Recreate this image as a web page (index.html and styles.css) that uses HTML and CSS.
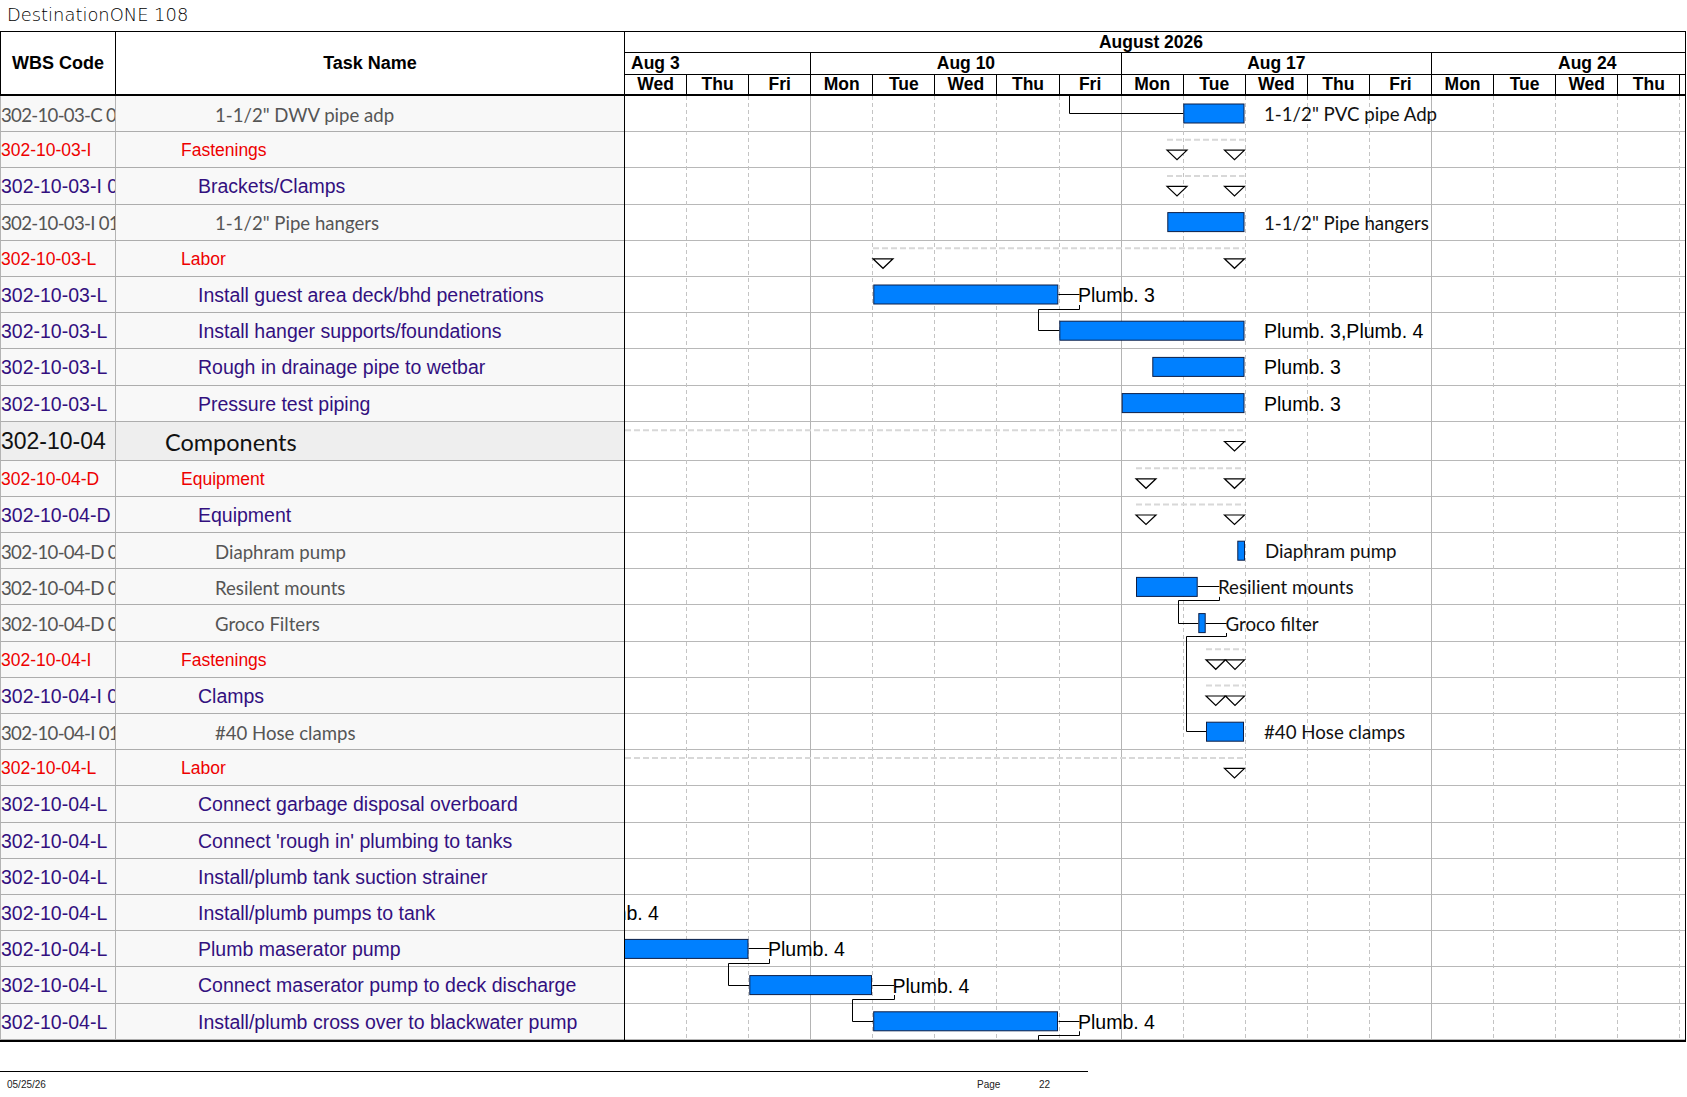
FILE: index.html
```html
<!DOCTYPE html>
<html lang="en">
<head>
<meta charset="utf-8">
<title>DestinationONE 108</title>
<link rel="stylesheet" href="styles.css">
</head>
<body>
<div class="title">DestinationONE 108</div>
<div class="sheet">
  <div class="head">
    <div class="h-wbs">WBS Code</div>
    <div class="h-task">Task Name</div>
    <div class="h-chart">
      <div class="h-month">August 2026</div>
      <div class="h-weeks">
        <div class="wk wk3 first">Aug 3</div>
        <div class="wk wk5">Aug 10</div>
        <div class="wk wk5">Aug 17</div>
        <div class="wk wk5 last">Aug 24</div>
      </div>
      <div class="h-days">
        <div class="day">Wed</div><div class="day">Thu</div><div class="day">Fri</div>
        <div class="day">Mon</div><div class="day">Tue</div><div class="day">Wed</div><div class="day">Thu</div><div class="day">Fri</div>
        <div class="day">Mon</div><div class="day">Tue</div><div class="day">Wed</div><div class="day">Thu</div><div class="day">Fri</div>
        <div class="day">Mon</div><div class="day">Tue</div><div class="day">Wed</div><div class="day">Thu</div><div class="day rest"></div>
      </div>
    </div>
  </div>

  <div class="body">
    <div class="chart">
      <div class="crows">
        <div class="crow"></div><div class="crow"></div><div class="crow"></div><div class="crow"></div><div class="crow"></div>
        <div class="crow"></div><div class="crow"></div><div class="crow"></div><div class="crow"></div><div class="crow comp"></div>
        <div class="crow"></div><div class="crow"></div><div class="crow"></div><div class="crow"></div><div class="crow"></div>
        <div class="crow"></div><div class="crow"></div><div class="crow"></div><div class="crow"></div><div class="crow"></div>
        <div class="crow"></div><div class="crow"></div><div class="crow"></div><div class="crow"></div><div class="crow"></div>
        <div class="crow"></div>
      </div>
      <svg class="canvas" width="1060" height="944" viewBox="625 96 1060 944" xmlns="http://www.w3.org/2000/svg">
        <path class="grid-day" d="M686.5 96V1040M748.5 96V1040M872.5 96V1040M934.5 96V1040M996.5 96V1040M1059.5 96V1040M1183.5 96V1040M1245.5 96V1040M1307.5 96V1040M1369.5 96V1040M1493.5 96V1040M1555.5 96V1040M1617.5 96V1040M1679.5 96V1040"/>
        <path class="grid-week" d="M810.5 96V1040M1121.5 96V1040M1431.5 96V1040"/>
        <path class="summary" d="M1167 139.7H1244.5M1167 175.9H1244.5M873 248.3H1244.5M625 430.3H1244.5M1136 468.3H1244.5M1136 504.5H1244.5M1206 649.3H1244.5M1206 685.5H1244.5M625 757.9H1244.5"/>
        <path class="link" d="M1069.5 96V113.5H1183.3
          M1058.3 294.5H1079.5M1079.5 305V309.5H1038.5V330.5H1059.3
          M1197.7 586.5H1219.3M1219.5 596.9V600.5H1178.5V623.5H1198.3
          M1205.7 623.5H1226.7M1226.5 633V636.5H1186.5V731.5H1206
          M748.5 948.5H769.5M769.5 958.9V963.5H728.5V985.5H749.3
          M872.5 985.5H894M894.5 995V999.5H852.5V1021.5H873.2
          M1058.5 1021.5H1079.5M1079.5 1031.3V1035.5H1038.5V1045"/>
        <g class="bars">
          <rect x="1183.8" y="104" width="60.2" height="19"/>
          <rect x="1167.8" y="212.6" width="76.2" height="19"/>
          <rect x="873.8" y="285" width="184" height="19"/>
          <rect x="1059.8" y="321.2" width="184.2" height="19"/>
          <rect x="1152.8" y="357.4" width="91.2" height="19"/>
          <rect x="1122.2" y="393.6" width="121.8" height="19"/>
          <rect x="1237.8" y="541.2" width="6.7" height="19"/>
          <rect x="1136.5" y="577.4" width="60.7" height="19"/>
          <rect x="1198.8" y="613.6" width="6.4" height="19"/>
          <rect x="1206.5" y="722.2" width="37" height="19"/>
          <rect x="610" y="939.4" width="138" height="19"/>
          <rect x="749.8" y="975.6" width="121.7" height="19"/>
          <rect x="873.7" y="1011.8" width="183.8" height="19"/>
        </g>
        <g class="ms">
          <polygon points="1167,150.2 1187,150.2 1177,159.7"/>
          <polygon points="1224.5,150.2 1244.5,150.2 1234.5,159.7"/>
          <polygon points="1167,186.4 1187,186.4 1177,195.9"/>
          <polygon points="1224.5,186.4 1244.5,186.4 1234.5,195.9"/>
          <polygon points="873,258.8 893,258.8 883,268.3"/>
          <polygon points="1224.5,258.8 1244.5,258.8 1234.5,268.3"/>
          <polygon points="1224.5,441.5 1244.5,441.5 1234.5,451"/>
          <polygon points="1136,478.8 1156,478.8 1146,488.3"/>
          <polygon points="1224.5,478.8 1244.5,478.8 1234.5,488.3"/>
          <polygon points="1136,515 1156,515 1146,524.5"/>
          <polygon points="1224.5,515 1244.5,515 1234.5,524.5"/>
          <polygon points="1206,659.8 1225.5,659.8 1215.75,669.3"/>
          <polygon points="1225.5,659.8 1244.5,659.8 1235,669.3"/>
          <polygon points="1206,696 1225.5,696 1215.75,705.5"/>
          <polygon points="1225.5,696 1244.5,696 1235,705.5"/>
          <polygon points="1224.5,768.4 1244.5,768.4 1234.5,777.9"/>
        </g>
      </svg>
      <span class="lbl k" style="left:639px;top:8px">1-1/2" PVC pipe Adp</span>
      <span class="lbl k" style="left:639px;top:116.5px">1-1/2" Pipe hangers</span>
      <span class="lbl a" style="left:453px;top:189px">Plumb. 3</span>
      <span class="lbl a" style="left:639px;top:225.2px">Plumb. 3,Plumb. 4</span>
      <span class="lbl a" style="left:639px;top:261.4px">Plumb. 3</span>
      <span class="lbl a" style="left:639px;top:297.6px">Plumb. 3</span>
      <span class="lbl k" style="left:640px;top:445.2px">Diaphram pump</span>
      <span class="lbl k" style="left:593px;top:481.4px">Resilient mounts</span>
      <span class="lbl k" style="left:600.5px;top:517.6px">Groco filter</span>
      <span class="lbl k" style="left:639px;top:626.2px">#40 Hose clamps</span>
      <span class="lbl a" style="left:-43px;top:807.2px">Plumb. 4</span>
      <span class="lbl a" style="left:143px;top:843.4px">Plumb. 4</span>
      <span class="lbl a" style="left:267.5px;top:879.6px">Plumb. 4</span>
      <span class="lbl a" style="left:453px;top:915.8px">Plumb. 4</span>
    </div>

    <div class="cell wbs g">302-10-03-C 01</div><div class="cell task g">1-1/2" DWV pipe adp</div>
    <div class="cell wbs r">302-10-03-I</div><div class="cell task r">Fastenings</div>
    <div class="cell wbs p">302-10-03-I 01</div><div class="cell task p">Brackets/Clamps</div>
    <div class="cell wbs g">302-10-03-I 01 01</div><div class="cell task g">1-1/2" Pipe hangers</div>
    <div class="cell wbs r">302-10-03-L</div><div class="cell task r">Labor</div>
    <div class="cell wbs p">302-10-03-L</div><div class="cell task p">Install guest area deck/bhd penetrations</div>
    <div class="cell wbs p">302-10-03-L</div><div class="cell task p">Install hanger supports/foundations</div>
    <div class="cell wbs p">302-10-03-L</div><div class="cell task p">Rough in drainage pipe to wetbar</div>
    <div class="cell wbs p">302-10-03-L</div><div class="cell task p">Pressure test piping</div>
    <div class="cell wbs c">302-10-04</div><div class="cell task c">Components</div>
    <div class="cell wbs r">302-10-04-D</div><div class="cell task r">Equipment</div>
    <div class="cell wbs p">302-10-04-D</div><div class="cell task p">Equipment</div>
    <div class="cell wbs g">302-10-04-D 01</div><div class="cell task g">Diaphram pump</div>
    <div class="cell wbs g">302-10-04-D 02</div><div class="cell task g">Resilent mounts</div>
    <div class="cell wbs g">302-10-04-D 03</div><div class="cell task g">Groco Filters</div>
    <div class="cell wbs r">302-10-04-I</div><div class="cell task r">Fastenings</div>
    <div class="cell wbs p">302-10-04-I 01</div><div class="cell task p">Clamps</div>
    <div class="cell wbs g">302-10-04-I 01 01</div><div class="cell task g">#40 Hose clamps</div>
    <div class="cell wbs r">302-10-04-L</div><div class="cell task r">Labor</div>
    <div class="cell wbs p">302-10-04-L</div><div class="cell task p">Connect garbage disposal overboard</div>
    <div class="cell wbs p">302-10-04-L</div><div class="cell task p">Connect 'rough in' plumbing to tanks</div>
    <div class="cell wbs p">302-10-04-L</div><div class="cell task p">Install/plumb tank suction strainer</div>
    <div class="cell wbs p">302-10-04-L</div><div class="cell task p">Install/plumb pumps to tank</div>
    <div class="cell wbs p">302-10-04-L</div><div class="cell task p">Plumb maserator pump</div>
    <div class="cell wbs p">302-10-04-L</div><div class="cell task p">Connect maserator pump to deck discharge</div>
    <div class="cell wbs p">302-10-04-L</div><div class="cell task p">Install/plumb cross over to blackwater pump</div>
  </div>
</div>

<div class="footer">
  <span class="date">05/25/26</span>
  <span class="page">Page</span>
  <span class="num">22</span>
</div>
</body>
</html>
```

FILE: styles.css
```css
* { box-sizing: border-box; }

html, body {
  margin: 0;
  background: #ffffff;
}

body {
  font-family: "Liberation Sans", Arial, sans-serif;
  color: #000;
  width: 1687px;
  height: 1097px;
  overflow: hidden;
}

.title {
  height: 31px;
  padding-left: 7px;
  font-family: "DejaVu Sans", sans-serif;
  font-weight: 200;
  font-size: 17.9px;
  line-height: 29px;
  color: #000;
  white-space: nowrap;
}

.sheet {
  width: 1686px;
}

/* ---------- header ---------- */
.head {
  display: grid;
  grid-template-columns: 116px 508px 1062px;
  height: 65px;
  border-top: 1px solid #000;
  border-bottom: 2px solid #000;
  font-weight: bold;
  font-size: 17.5px;
}

.h-wbs,
.h-task {
  display: flex;
  align-items: center;
  justify-content: center;
  font-size: 18px;
}

.h-wbs {
  border-left: 1px solid #000;
  border-right: 1px solid #000;
}

.h-chart {
  border-left: 1px solid #000;
  border-right: 1px solid #000;
  display: flex;
  flex-direction: column;
  overflow: hidden;
}

.h-month {
  height: 21px;
  line-height: 20px;
  border-bottom: 1px solid #000;
  text-align: center;
  padding-right: 8px;
}

.h-weeks {
  height: 22px;
  border-bottom: 1px solid #000;
  display: flex;
  overflow: hidden;
}

.wk {
  flex: none;
  line-height: 21px;
  text-align: center;
  border-right: 1px solid #000;
  white-space: nowrap;
}

.wk3 { width: 186.24px; }
.wk5 { width: 310.4px; }

.wk.first {
  text-align: left;
  padding-left: 6px;
}

.wk.last { border-right: none; }

.h-days {
  height: 19px;
  display: flex;
  overflow: hidden;
}

.day {
  flex: none;
  width: 62.08px;
  line-height: 19px;
  text-align: center;
  border-right: 1px solid #000;
}

.day.rest {
  flex: 1;
  width: auto;
  border-right: none;
}

/* ---------- body ---------- */
.body {
  display: grid;
  grid-template-columns: 116px 508px 1062px;
  grid-template-rows: repeat(9, 36.2px) 39px repeat(16, 36.2px);
  border-bottom: 2px solid #000;
}

.cell {
  display: flex;
  align-items: center;
  overflow: hidden;
  white-space: nowrap;
  background: #f8f8f8;
  border-bottom: 1px solid #adadad;
  padding-top: 2px;
}

.wbs {
  border-left: 1px solid #b4b4b4;
  border-right: 1px solid #b4b4b4;
}

.r {
  color: #ee0000;
  font-size: 17.5px;
}

.p {
  color: #33107f;
  font-size: 19.5px;
}

.g {
  color: #555555;
  font-family: Lato, "Liberation Sans", sans-serif;
  font-size: 18.6px;
}

.wbs.g { letter-spacing: -0.7px; }

.c {
  background: #eeeeee;
  color: #111;
}

.wbs.c { font-size: 23px; }

.task.c {
  font-family: Lato, "Liberation Sans", sans-serif;
  font-size: 23.5px;
  padding-left: 49px;
}

.task.r { padding-left: 65px; }
.task.p { padding-left: 82px; }
.task.g { padding-left: 99px; }

/* ---------- gantt canvas ---------- */
.chart {
  grid-column: 3;
  grid-row: 1 / -1;
  position: relative;
  overflow: hidden;
  border-left: 1px solid #000;
  border-right: 1px solid #000;
  background: #fff;
}

.crow {
  height: 36.2px;
  border-bottom: 1px solid #b8b8b8;
}

.crow.comp { height: 39px; }

.canvas {
  position: absolute;
  left: 0;
  top: 0;
}

.grid-day {
  fill: none;
  stroke: #c4c4c4;
  stroke-width: 1;
  stroke-dasharray: 4 3;
}

.grid-week {
  fill: none;
  stroke: #b4b4b4;
  stroke-width: 1;
}

.summary {
  fill: none;
  stroke: #d8d8d8;
  stroke-width: 2;
  stroke-dasharray: 6 3;
}

.link {
  fill: none;
  stroke: #000;
  stroke-width: 1;
}

.bars rect {
  fill: #0080ff;
  stroke: #0d1f48;
  stroke-width: 1;
}

.ms polygon {
  fill: #fff;
  stroke: #000;
  stroke-width: 1.2;
  stroke-linejoin: miter;
}

.lbl {
  position: absolute;
  line-height: 20px;
  white-space: nowrap;
  color: #000;
}

.lbl.a {
  font-family: "Liberation Sans", Arial, sans-serif;
  font-size: 19.5px;
}

.lbl.k {
  font-family: Lato, "Liberation Sans", sans-serif;
  font-size: 18.7px;
  color: #111;
}

/* ---------- footer ---------- */
.footer {
  width: 1088px;
  margin-top: 29px;
  border-top: 1px solid #000;
  display: grid;
  grid-template-columns: 970px 62px auto;
  padding: 7px 0 0 7px;
  font-family: "Liberation Sans", Arial, sans-serif;
  font-size: 10px;
  line-height: 12px;
  color: #222;
}
```
